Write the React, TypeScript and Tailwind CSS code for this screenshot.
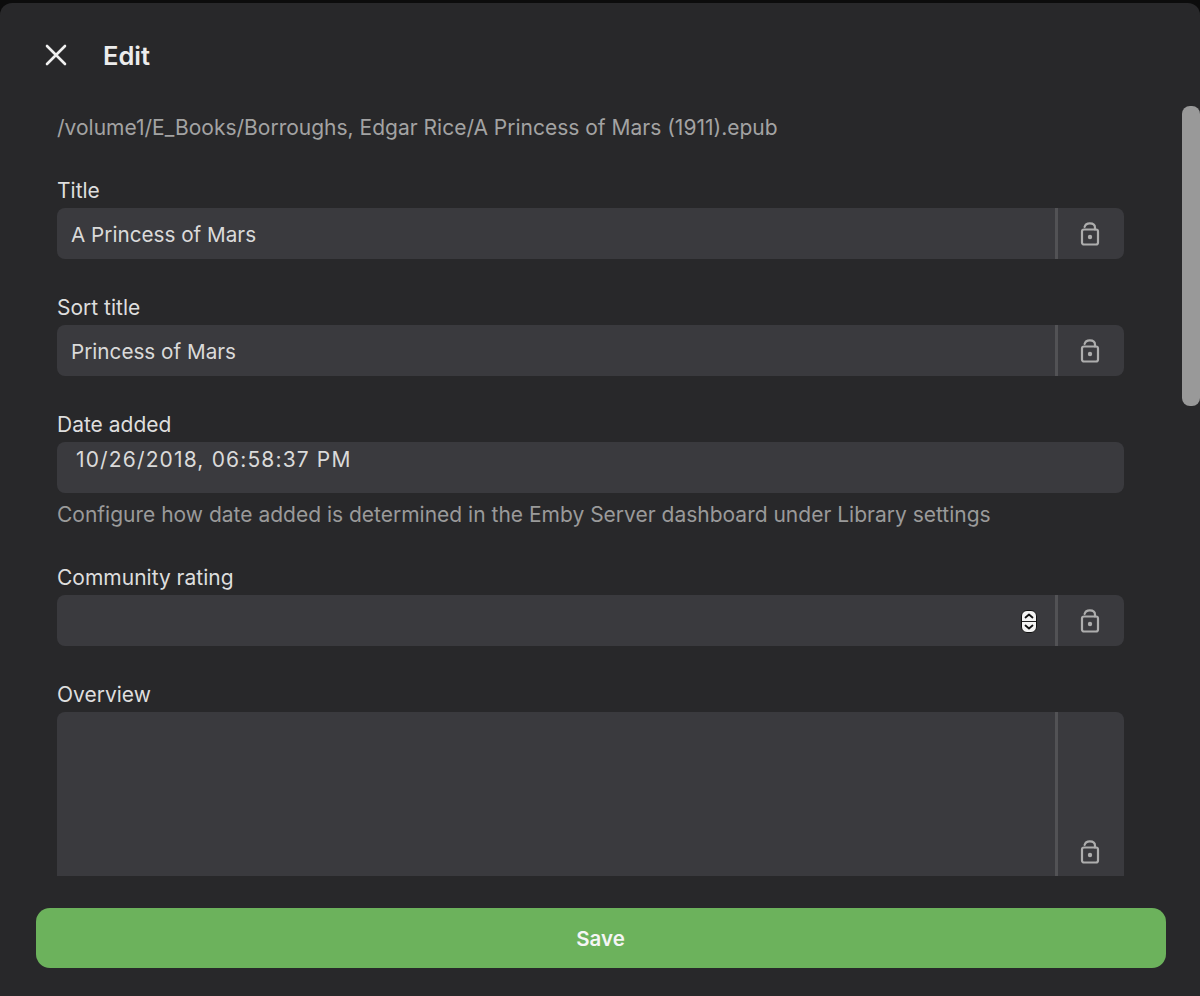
const font = { fontFamily: 'Inter, sans-serif' }

function LockIcon() {
  return (
    <svg width="20" height="26" viewBox="0 0 20 26" fill="none" stroke="#adadad" strokeWidth="2.2">
      <rect x="2" y="8.5" width="16" height="15" rx="2" />
      <path d="M4.6 6C5.2 3.8 7 2.4 9.8 2.4C13 2.4 15 4.2 15 6.8V8.5" strokeLinecap="round" />
      <circle cx="10" cy="16" r="2.2" fill="#adadad" stroke="none" />
    </svg>
  )
}

function Spinner() {
  return (
    <svg className="mt-[2px]" width="16" height="23" viewBox="0 0 16 23" fill="none">
      <rect x="0.5" y="0.5" width="15" height="22" rx="5.5" fill="#f4f4f4" stroke="#111" />
      <path d="M1 11.5H15" stroke="#222" strokeWidth="1" />
      <path d="M4.5 7.5L8 4.5L11.5 7.5" stroke="#111" strokeWidth="1.8" strokeLinecap="round" strokeLinejoin="round" />
      <path d="M4.5 15.5L8 18.5L11.5 15.5" stroke="#111" strokeWidth="1.8" strokeLinecap="round" strokeLinejoin="round" />
    </svg>
  )
}

function LockField({ label, value, spinner }: { label: string; value?: string; spinner?: boolean }) {
  return (
    <div className="flex flex-col">
      <label className="h-[34px] pt-[2px] text-[21px] leading-[29px] text-[#dedede]">{label}</label>
      <div className="flex h-[51px] rounded-lg bg-[#3a3a3e]">
        <div className="flex flex-1 items-center justify-between pl-[14px] pr-[18px] text-[20.7px] text-[#dadada]">
          <span className="pt-[2px]">{value}</span>
          {spinner && <Spinner />}
        </div>
        <div className="flex w-[69px] items-center justify-center border-l-[3px] border-[#525255] pr-[3px]">
          <LockIcon />
        </div>
      </div>
    </div>
  )
}

export default function App() {
  return (
    <div style={font} className="h-[996px] w-[1200px] overflow-hidden bg-[#0c0c0c] pt-[3px]">
      <div className="flex h-[993px] flex-col rounded-t-xl bg-[#28282a]">

        {/* Header */}
        <div className="flex h-[103px] shrink-0 items-center pl-[45px]">
          <svg width="22" height="22" viewBox="0 0 22 22" fill="none" stroke="#f0f0f0" strokeWidth="2.6" strokeLinecap="round">
            <path d="M2 2L20 20M20 2L2 20" />
          </svg>
          <h1 className="ml-[36px] mt-[4px] text-[25.5px] font-semibold text-[#ececec]">Edit</h1>
        </div>

        {/* Scrolling form */}
        <div className="relative h-[770px] shrink-0 overflow-hidden pl-[57px] pr-[76px]">
          <div className="flex h-[42px] items-center pt-[1px] text-[21px] text-[#a3a3a3]">
            /volume1/E_Books/Borroughs, Edgar Rice/A Princess of Mars (1911).epub
          </div>
          <div className="mt-[26px] flex flex-col gap-[32px]">
            <LockField label="Title" value="A Princess of Mars" />
            <LockField label="Sort title" value="Princess of Mars" />
            <div className="flex flex-col">
              <label className="h-[34px] pt-[2px] text-[21px] leading-[29px] text-[#dedede]">Date added</label>
              <div className="h-[51px] rounded-lg bg-[#3a3a3e] pl-[19px] pt-[2px] text-[21px] tracking-[1.15px] text-[#dadada]">
                10/26/2018, 06:58:37 PM
              </div>
              <p className="mt-[7px] h-[29px] text-[21px] leading-[29px] text-[#9a9a9a]">
                Configure how date added is determined in the Emby Server dashboard under Library settings
              </p>
            </div>
            <LockField label="Community rating" spinner />
            <div className="flex flex-col">
              <label className="h-[34px] pt-[2px] text-[21px] leading-[29px] text-[#dedede]">Overview</label>
              <div className="flex h-[220px] rounded-t-lg bg-[#3a3a3e]">
                <div className="flex-1" />
                <div className="flex w-[69px] justify-center border-l-[3px] border-[#525255] pr-[3px] pt-[127px]">
                  <div><LockIcon /></div>
                </div>
              </div>
            </div>
          </div>
          {/* Scrollbar thumb */}
          <div className="absolute right-0 top-0 h-[300px] w-[18px] rounded-lg bg-[#999999]" />
        </div>

        {/* Footer */}
        <div className="flex flex-1 items-start justify-center bg-[#28282a] pl-[36px] pr-[34px] pt-[32px]">
          <button className="h-[60px] w-full rounded-[14px] bg-[#6cb25c] pt-[2px] pr-[1px] text-[20.5px] font-semibold text-[#f5f5f5]">
            Save
          </button>
        </div>
      </div>
    </div>
  )
}
